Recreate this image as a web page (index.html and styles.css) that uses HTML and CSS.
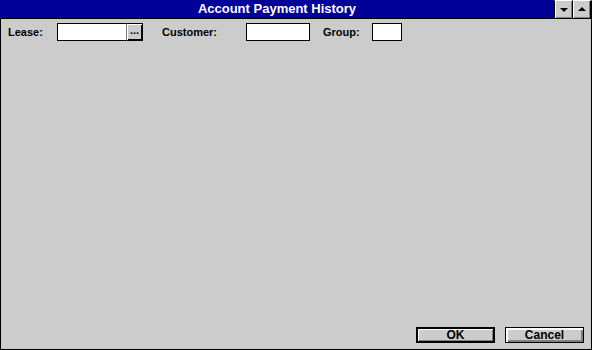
FILE: index.html
```html
<!DOCTYPE html>
<html lang="en">
<head>
    <meta charset="utf-8" />
    <title>Account Payment History</title>
    <link rel="stylesheet" href="styles.css">
</head>
<body>
    <div class="window">
        <div class="titlebar">
            <div class="title">Account Payment History</div>
            <div class="sysbtn"><span class="arrow-down"></span></div>
            <div class="sysbtn"><span class="arrow-up"></span></div>
        </div>

        <div class="filters">
            <label class="lbl lbl-lease">Lease:</label>
            <div class="lookup">
                <input type="text" class="field field-lease" />
                <button class="dots">...</button>
            </div>
            <label class="lbl lbl-customer">Customer:</label>
            <input type="text" class="field field-customer" />
            <label class="lbl lbl-group">Group:</label>
            <input type="text" class="field field-group" />
        </div>

        <div class="content"></div>

        <div class="actions">
            <button class="btn btn-default">OK</button>
            <button class="btn">Cancel</button>
        </div>
    </div>
</body>
</html>
```

FILE: styles.css
```css
body {
    margin: 0;
    padding: 0;
    font-family: "Liberation Sans", Arial, sans-serif;
    font-size: 11px;
    font-weight: bold;
}
.window {
    width: 592px;
    height: 350px;
    box-sizing: border-box;
    border: 1px solid #000;
    border-top: none;
    background: #cccccc;
    display: flex;
    flex-direction: column;
}
.titlebar {
    height: 19px;
    box-sizing: border-box;
    background: #000099;
    border-bottom: 1px solid #000;
    display: flex;
    margin: 0 -1px;
}
.title {
    flex: 1;
    color: #fff;
    font-size: 13px;
    text-align: center;
    line-height: 18px;
}
.sysbtn {
    width: 18px;
    height: 18px;
    box-sizing: border-box;
    background: #cccccc;
    border-left: 1px solid #000;
    border-top: 1px solid #fff;
    box-shadow: inset 1px 0 0 #fff, inset -1px -1px 0 #808080;
    display: flex;
    align-items: center;
    justify-content: center;
}
.sysbtn:last-child {
    width: 20px;
    border-right: 2px solid #000;
}
.arrow-down {
    width: 0;
    height: 0;
    border-left: 4px solid transparent;
    border-right: 4px solid transparent;
    border-top: 4px solid #000;
    margin-top: 1px;
}
.arrow-up {
    width: 0;
    height: 0;
    border-left: 4px solid transparent;
    border-right: 4px solid transparent;
    border-bottom: 4px solid #000;
    margin-top: -1px;
}
.filters {
    display: flex;
    align-items: center;
    padding: 4px 0 0 7px;
    height: 18px;
}
.lbl {
    color: #000;
}
.lbl-lease {
    width: 49px;
}
.lbl-customer {
    margin-left: 19px;
    width: 84px;
}
.lbl-group {
    margin-left: 13px;
    width: 49px;
}
.lookup {
    display: flex;
}
.field {
    height: 18px;
    box-sizing: border-box;
    border: 1px solid #000;
    background: #fff;
    margin: 0;
    padding: 0 2px;
    outline: none;
}
.field-lease {
    width: 69px;
    border-right: none;
}
.field-customer {
    width: 64px;
}
.field-group {
    width: 30px;
}
.dots {
    width: 17px;
    height: 18px;
    box-sizing: border-box;
    margin: 0;
    padding: 0 0 4px;
    border: 1px solid #000;
    border-left: 1px solid #808080;
    background: #cccccc;
    box-shadow: inset 1px 1px 0 #fff, inset -1px -1px 0 #000;
    font-family: "Liberation Sans", Arial, sans-serif;
    font-size: 11px;
    font-weight: bold;
    line-height: 10px;
}
.content {
    flex: 1;
}
.actions {
    display: flex;
    justify-content: flex-end;
    gap: 10px;
    padding: 0 7px 6px 0;
}
.btn {
    width: 79px;
    height: 16px;
    box-sizing: border-box;
    margin: 0;
    padding: 0;
    border: 1px solid #000;
    background: #cccccc;
    box-shadow: inset 2px 2px 0 #fff, inset -2px -2px 0 #808080;
    font-family: "Liberation Sans", Arial, sans-serif;
    font-size: 12px;
    font-weight: bold;
    line-height: 13px;
    color: #000;
}
.btn-default {
    border-width: 2px;
    box-shadow: inset 1px 1px 0 #fff, inset -1px -1px 0 #808080;
}
```
